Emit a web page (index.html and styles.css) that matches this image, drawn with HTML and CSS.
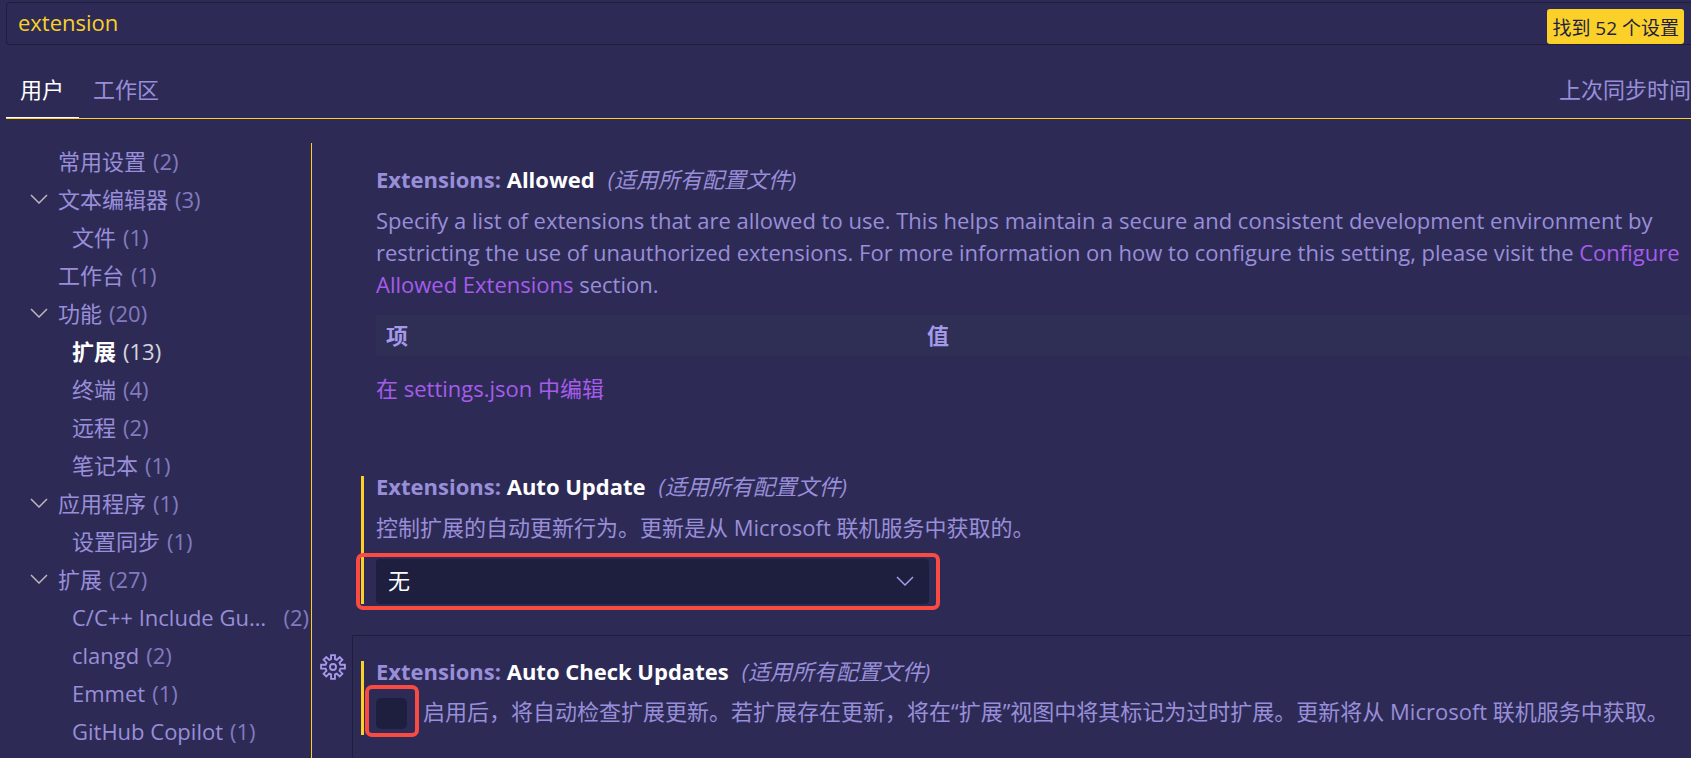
FILE: index.html
```html
<!DOCTYPE html>
<html lang="zh-CN">
<head>
<meta charset="utf-8">
<title>设置</title>
<link rel="stylesheet" href="styles.css">
</head>
<body>
<div class="editor">
  <header class="header">
    <div class="search">
      <input class="search-input" type="text" value="extension" aria-label="搜索设置">
      <span class="badge">找到 52 个设置</span>
    </div>
    <div class="tabs">
      <button class="tab tab-active" type="button">用户</button>
      <button class="tab" type="button">工作区</button>
      <span class="sync">上次同步时间</span>
    </div>
  </header>
  <div class="body">
    <nav class="toc" aria-label="设置目录">
      <a class="row" href="#"><span class="label">常用设置</span><span class="count">(2)</span></a>
      <a class="row" href="#"><svg class="twist" viewBox="0 0 18 10"><path d="M1 1l8 8 8-8"/></svg><span class="label">文本编辑器</span><span class="count">(3)</span></a>
      <a class="row child" href="#"><span class="label">文件</span><span class="count">(1)</span></a>
      <a class="row" href="#"><span class="label">工作台</span><span class="count">(1)</span></a>
      <a class="row" href="#"><svg class="twist" viewBox="0 0 18 10"><path d="M1 1l8 8 8-8"/></svg><span class="label">功能</span><span class="count">(20)</span></a>
      <a class="row child selected" href="#"><span class="label">扩展</span><span class="count">(13)</span></a>
      <a class="row child" href="#"><span class="label">终端</span><span class="count">(4)</span></a>
      <a class="row child" href="#"><span class="label">远程</span><span class="count">(2)</span></a>
      <a class="row child" href="#"><span class="label">笔记本</span><span class="count">(1)</span></a>
      <a class="row" href="#"><svg class="twist" viewBox="0 0 18 10"><path d="M1 1l8 8 8-8"/></svg><span class="label">应用程序</span><span class="count">(1)</span></a>
      <a class="row child" href="#"><span class="label">设置同步</span><span class="count">(1)</span></a>
      <a class="row" href="#"><svg class="twist" viewBox="0 0 18 10"><path d="M1 1l8 8 8-8"/></svg><span class="label">扩展</span><span class="count">(27)</span></a>
      <a class="row child spread" href="#"><span class="label">C/C++ Include Gu…</span><span class="count">(2)</span></a>
      <a class="row child" href="#"><span class="label">clangd</span><span class="count">(2)</span></a>
      <a class="row child" href="#"><span class="label">Emmet</span><span class="count">(1)</span></a>
      <a class="row child" href="#"><span class="label">GitHub Copilot</span><span class="count">(1)</span></a>
    </nav>
    <main class="settings">
      <section class="item">
        <div class="content">
          <h2 class="title"><span class="category">Extensions: </span>Allowed<em class="scope">(适用所有配置文件)</em></h2>
          <p class="desc">Specify a list of extensions that are allowed to use. This helps maintain a secure and consistent development environment by restricting the use of unauthorized extensions. For more information on how to configure this setting, please visit the <a class="link" href="#">Configure Allowed Extensions</a> section.</p>
          <table class="table">
            <thead><tr><th class="key">项</th><th>值</th></tr></thead>
          </table>
          <p class="edit"><a class="link" href="#">在 settings.json 中编辑</a></p>
        </div>
      </section>
      <section class="item">
        <div class="content modified">
          <h2 class="title"><span class="category">Extensions: </span>Auto Update<em class="scope">(适用所有配置文件)</em></h2>
          <p class="desc" id="update-desc">控制扩展的自动更新行为。更新是从 Microsoft 联机服务中获取的。</p>
          <div class="select-wrap">
            <select class="select" aria-labelledby="update-desc"><option>无</option></select>
            <svg class="select-arrow" viewBox="0 0 18 10"><path d="M1 1l8 8 8-8"/></svg>
            <span class="mark mark-select"></span>
          </div>
        </div>
      </section>
      <section class="item focused">
        <button class="gear" type="button" aria-label="更多操作">
          <svg viewBox="0 0 24 24"><path d="M10.2 1h3.600v3.800l1.700.7 2.700-2.700 2.500 2.500-2.700 2.700.8 1.900H23v3.600h-4.200l-.8 2 2.700 2.700-2.500 2.500-2.700-2.700-1.700.7V23h-3.600v-4.300l-1.700-.7-2.700 2.700-2.500-2.500L6 15.500l-.8-2H1V9.900h4.200L6 8 3.300 5.300l2.500-2.500 2.700 2.700 1.700-.7z"/><circle cx="12" cy="12" r="2.800"/></svg>
        </button>
        <div class="content modified check-content">
          <h2 class="title"><span class="category">Extensions: </span>Auto Check Updates<em class="scope">(适用所有配置文件)</em></h2>
          <div class="check-row">
            <span class="check-wrap"><input class="check" type="checkbox" id="auto-check"><span class="mark mark-check"></span></span>
            <label class="check-label" for="auto-check">启用后，将自动检查扩展更新。若扩展存在更新，将在“扩展”视图中将其标记为过时扩展。更新将从 Microsoft 联机服务中获取。</label>
          </div>
        </div>
      </section>
    </main>
  </div>
</div>
</body>
</html>
```
FILE: styles.css
```css
:root {
  --bg: #2d2b55;
  --dark: #1e1e3f;
  --text: #998ed9;
  --bright: #a599e9;
  --yellow: #fad029;
  --link: #a65ceb;
  --mark: #f94b42;
}

* { box-sizing: border-box; }

body {
  margin: 0;
  background: var(--bg);
  color: var(--text);
  font: 22px/31px "Open Sans", "Noto Sans CJK SC", sans-serif;
}

button, input, select { font: inherit; color: inherit; }
a { color: inherit; text-decoration: none; }
h2, p { margin: 0; }

.editor {
  height: 100vh;
  display: flex;
  flex-direction: column;
  overflow: hidden;
}

.header { padding: 2px 0 0 6px; }

.search {
  display: flex;
  align-items: flex-end;
  padding-right: 7px;
  border: 1px solid var(--dark);
  border-right: 0;
  border-radius: 4px 0 0 4px;
}

.search-input {
  flex: 1;
  min-width: 0;
  height: 41px;
  padding: 0 11px 3px;
  border: 0;
  outline: 0;
  background: transparent;
  color: var(--yellow);
}

.badge {
  padding: 3px 5px 0;
  border-radius: 3px;
  background: var(--yellow);
  color: #1e1e3f;
  font-size: 19px;
  line-height: 32px;
}

.tabs {
  display: flex;
  align-items: stretch;
  height: 74px;
  padding-top: 16px;
  border-bottom: 1px solid var(--yellow);
}

.tab {
  padding: 0 15px 0 14px;
  border: 0;
  border-bottom: 1px solid transparent;
  background: transparent;
}

.tab-active {
  color: #fff;
  border-bottom-color: #fff;
}

.sync {
  margin-left: auto;
  align-self: center;
  white-space: nowrap;
}

.body {
  flex: 1;
  min-height: 0;
  display: flex;
  padding-top: 24px;
}

.toc {
  flex: 0 0 312px;
  border-right: 1px solid var(--yellow);
  overflow: hidden;
}

.row {
  display: flex;
  align-items: center;
  gap: 7px;
  height: 38px;
  padding: 0 2px 2px 58px;
  white-space: nowrap;
}

.child { padding-left: 72px; }
.spread { justify-content: space-between; }

.count { opacity: 0.8; }

.selected { color: #fff; }
.selected .label { font-weight: 700; }

.twist {
  flex: none;
  width: 18px;
  height: 10px;
  margin-left: -28px;
  margin-right: 3px;
  fill: none;
  stroke: #b9b9b9;
  stroke-width: 1.5;
}

.settings {
  flex: 1;
  min-width: 0;
  padding-left: 40px;
}

.item {
  position: relative;
  padding: 25px 0 31px 8px;
  border: 1px solid transparent;
  border-right: 0;
  border-bottom: 0;
}

.item:first-child { padding-bottom: 46px; }

.focused {
  height: 200px;
  border-color: var(--dark);
}

.content {
  padding-left: 12px;
  border-left: 3px solid transparent;
}

.modified { border-left-color: var(--yellow); }

.title {
  color: #fff;
  font-size: 22px;
  line-height: 20px;
}

.category { color: var(--text); }

.scope {
  margin-left: 13px;
  color: var(--text);
  font-weight: 400;
}

.desc {
  margin-top: 15px;
  padding-right: 2px;
  line-height: 32px;
}

.link { color: var(--link); }

.table {
  width: 100%;
  margin-top: 15px;
  border-collapse: collapse;
  background: #2f2e55;
  color: var(--bright);
}

.table th {
  height: 41px;
  padding: 0 10px;
  text-align: left;
}

.table .key { width: 541px; }

.edit { margin-top: 17px; }

.select-wrap {
  position: relative;
  width: 553px;
  margin-top: 16px;
}

.select {
  display: block;
  width: 100%;
  height: 45px;
  padding: 0 12px 2px;
  border: 0;
  border-radius: 4px;
  background: var(--dark);
  color: #fff;
  appearance: none;
}

.select-arrow {
  position: absolute;
  right: 15px;
  top: 17px;
  width: 18px;
  height: 10px;
  fill: none;
  stroke: var(--bright);
  stroke-width: 1.5;
  pointer-events: none;
}

.mark {
  position: absolute;
  border: 4px solid var(--mark);
  border-radius: 7px;
  pointer-events: none;
}

.mark-select { inset: -6px -11px -6px -20px; }
.mark-check { inset: -13px -12px -8px -11px; }

.gear {
  position: absolute;
  left: -33px;
  top: 18px;
  width: 26px;
  height: 26px;
  padding: 0;
  border: 0;
  background: transparent;
}

.gear svg {
  display: block;
  width: 26px;
  height: 26px;
  fill: none;
  stroke: var(--bright);
  stroke-width: 1.7;
}

.check-content { padding-bottom: 4px; }

.check-row {
  display: flex;
  align-items: center;
  gap: 16px;
  margin-top: 15px;
}

.check-wrap {
  position: relative;
  flex: none;
}

.check {
  display: block;
  width: 31px;
  height: 31px;
  margin: 0;
  border-radius: 5px;
  background: var(--dark);
  appearance: none;
}

.check-label {
  padding-bottom: 4px;
  white-space: nowrap;
}
```
